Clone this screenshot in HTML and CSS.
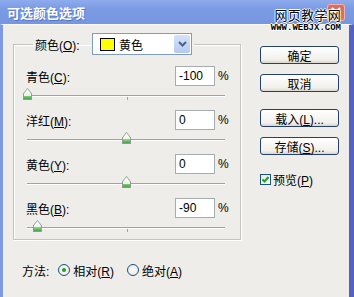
FILE: index.html
```html
<!DOCTYPE html>
<html lang="zh-cn">
<head>
    <meta charset="UTF-8">
    <title>可选颜色选项</title>
    <link rel="stylesheet" href="styles.css">
</head>
<body>
    <div class="window">
        <div class="titlebar">
            <span class="title">可选颜色选项</span>
            <span class="close">
                <svg width="18" height="17" viewBox="0 0 18 17"><path d="M5 4 L13 12 M13 4 L5 12" stroke="#fff" stroke-width="2"/></svg>
            </span>
        </div>

        <div class="watermark">
            <div class="wm-name">网页教学网</div>
            <div class="wm-url">WWW.WEBJX.COM</div>
        </div>

        <div class="client">
            <div class="main">
                <fieldset class="group">
                    <legend class="color-pick">
                        <span class="pick-label">颜色(<u>O</u>):</span>
                        <span class="select">
                            <span class="swatch"></span>
                            <span class="select-text">黄色</span>
                            <span class="select-arrow">
                                <svg width="9" height="6" viewBox="0 0 9 6"><path d="M1 1 L4.5 4.5 L8 1" fill="none" stroke="#4d6185" stroke-width="2"/></svg>
                            </span>
                        </span>
                    </legend>

                    <div class="row">
                        <label>青色(<u>C</u>):</label>
                        <span class="field">-100</span>
                        <span class="pct">%</span>
                    </div>
                    <div class="slider">
                        <span class="track"></span>
                        <span class="tick"></span>
                        <span class="thumb" style="left: 0%"></span>
                    </div>

                    <div class="row">
                        <label>洋红(<u>M</u>):</label>
                        <span class="field">0</span>
                        <span class="pct">%</span>
                    </div>
                    <div class="slider">
                        <span class="track"></span>
                        <span class="tick"></span>
                        <span class="thumb" style="left: 50%"></span>
                    </div>

                    <div class="row">
                        <label>黄色(<u>Y</u>):</label>
                        <span class="field">0</span>
                        <span class="pct">%</span>
                    </div>
                    <div class="slider">
                        <span class="track"></span>
                        <span class="tick"></span>
                        <span class="thumb" style="left: 50%"></span>
                    </div>

                    <div class="row">
                        <label>黑色(<u>B</u>):</label>
                        <span class="field">-90</span>
                        <span class="pct">%</span>
                    </div>
                    <div class="slider">
                        <span class="track"></span>
                        <span class="tick"></span>
                        <span class="thumb" style="left: 5%"></span>
                    </div>
                </fieldset>

                <div class="method">
                    <span class="method-label">方法:</span>
                    <span class="radio checked"></span>
                    <span class="radio-text">相对(<u>R</u>)</span>
                    <span class="radio"></span>
                    <span class="radio-text">绝对(<u>A</u>)</span>
                </div>
            </div>

            <div class="side">
                <button class="btn">确定</button>
                <button class="btn">取消</button>
                <button class="btn btn-gap">载入(<u>L</u>)...</button>
                <button class="btn">存储(<u>S</u>)...</button>
                <div class="preview">
                    <span class="checkbox">
                        <svg width="9" height="9" viewBox="0 0 9 9"><path d="M1.5 4.5 L3.5 6.5 L7.5 2" fill="none" stroke="#21a121" stroke-width="2"/></svg>
                    </span>
                    <span>预览(<u>P</u>)</span>
                </div>
            </div>
        </div>
    </div>
</body>
</html>
```

FILE: styles.css
```css
:root {
    --bg: #eeede9;
    --border-light: #7d99e2;
    --border-dark: #5561c3;
    --xp-dark: #1c5180;
    --group-line: #c4c4bc;
}

body {
    margin: 0;
    font-family: "Liberation Sans", "Noto Sans CJK SC", sans-serif;
    font-size: 12px;
    color: #000;
    background: #fff;
}

.window {
    position: relative;
    width: 354px;
    height: 297px;
    display: flex;
    flex-direction: column;
    overflow: hidden;
    background: var(--bg);
}

.titlebar {
    height: 24px;
    box-sizing: border-box;
    display: flex;
    align-items: center;
    padding: 0 9px 0 7px;
    background: linear-gradient(#8eabec, #7b9be4 35%, #7696e2);
}

.title {
    color: #fff;
    font-family: "Noto Sans CJK SC", sans-serif;
    font-size: 13px;
    font-weight: bold;
    text-shadow: 1px 1px 0 #5574c4;
}

.close {
    margin-left: auto;
    width: 18px;
    height: 17px;
    border-radius: 3px;
    background: #d86e64;
    box-shadow: inset 0 0 0 1px #f0b0a8;
    display: flex;
}

/* watermark lies over the title bar */
.watermark {
    position: absolute;
    top: 8px;
    right: 13px;
    text-align: right;
    color: #000;
    text-shadow: 1px 0 0 #fff, -1px 0 0 #fff, 0 1px 0 #fff, 0 -1px 0 #fff;
}

.wm-name {
    font-family: "Noto Sans CJK SC", sans-serif;
    font-size: 13px;
    line-height: 14px;
    letter-spacing: 0.3px;
}

.wm-url {
    font-family: "Liberation Mono", monospace;
    font-size: 9px;
    font-weight: bold;
    line-height: 8px;
    margin-top: 2px;
}

.client {
    flex: 1;
    display: flex;
    border-left: 3px solid var(--border-light);
    border-right: 5px solid var(--border-dark);
    border-top: 1px solid #fbfbf8;
    padding: 8px 0 0 10px;
}

.group {
    box-sizing: border-box;
    width: 228px;
    height: 207px;
    margin: 0;
    padding: 11px 11px 0 12px;
    border: 1px solid var(--group-line);
    box-shadow: inset 1px 1px 0 #fff, 1px 1px 0 #fff;
}

.color-pick {
    display: flex;
    align-items: center;
    margin-left: 7px;
    padding: 0 2px;
}

.pick-label {
    width: 57px;
}

.select {
    box-sizing: border-box;
    width: 100px;
    height: 22px;
    display: flex;
    align-items: center;
    border: 1px solid #7f9db9;
    background: #fff;
    padding: 0 1px 0 7px;
}

.swatch {
    width: 13px;
    height: 11px;
    background: #ffff00;
    border: 1px solid #000;
}

.select-text {
    margin-left: 4px;
    font-family: "Noto Sans CJK SC", sans-serif;
}

.select-arrow {
    margin-left: auto;
    width: 16px;
    height: 18px;
    border-radius: 2px;
    background: linear-gradient(#d6e2fb, #b5c9f5);
    display: flex;
    align-items: center;
    justify-content: center;
}

.row {
    display: flex;
    align-items: center;
    height: 20px;
}

.row label {
    flex: 1;
}

.field {
    box-sizing: border-box;
    width: 40px;
    height: 20px;
    padding: 2px 3px;
    background: #fff;
    border: 1px solid #a5acb2;
    line-height: 15px;
}

.pct {
    margin-left: 3px;
    width: 11px;
}

.slider {
    position: relative;
    height: 24px;
    width: 198px;
    margin-left: 1px;
}

.track {
    position: absolute;
    left: 0;
    right: 0;
    top: 9px;
    height: 1px;
    background: #a3a39b;
    border-bottom: 1px solid #fff;
}

.tick {
    position: absolute;
    left: 100px;
    top: 11px;
    width: 1px;
    height: 3px;
    background: #a3a39b;
}

.thumb {
    position: absolute;
    top: 2px;
    width: 9px;
    height: 12px;
    margin-left: -4px;
    background: #8d9d8a;
    clip-path: polygon(50% 0, 100% 45%, 100% 100%, 0 100%, 0 45%);
}

.thumb::after {
    content: "";
    position: absolute;
    left: 1px;
    top: 1px;
    right: 1px;
    bottom: 1px;
    background: linear-gradient(#fbfcf8, #eef3e8 65%, #8fd08f 65%, #44a444);
    clip-path: polygon(50% 0, 100% 45%, 100% 100%, 0 100%, 0 45%);
}

.method {
    display: flex;
    align-items: center;
    height: 20px;
    margin-top: 20px;
    padding-left: 9px;
}

.method-label {
    margin-right: 9px;
}

.radio {
    box-sizing: border-box;
    width: 12px;
    height: 12px;
    border-radius: 50%;
    border: 1px solid var(--xp-dark);
    background: radial-gradient(#fff, #e4e2da);
    display: flex;
    align-items: center;
    justify-content: center;
}

.radio.checked::after {
    content: "";
    width: 4px;
    height: 4px;
    border-radius: 50%;
    background: #21a121;
}

.radio-text {
    margin-left: 3px;
    margin-right: 13px;
}

.side {
    display: flex;
    flex-direction: column;
    width: 79px;
    margin-left: 19px;
    padding-top: 13px;
}

.btn {
    box-sizing: border-box;
    height: 18px;
    margin: 0 0 10px;
    padding: 0;
    font-family: "Liberation Sans", "Noto Sans CJK SC", sans-serif;
    font-size: 12px;
    color: #000;
    border: 1px solid #23406f;
    border-radius: 3px;
    background: linear-gradient(#fff, #f1f0ec 80%, #d9d5cb);
}

.btn-gap {
    margin-top: 7px;
}

.preview {
    display: flex;
    align-items: center;
    margin-top: 7px;
    height: 14px;
}

.checkbox {
    box-sizing: border-box;
    width: 11px;
    height: 11px;
    margin-right: 2px;
    border: 1px solid var(--xp-dark);
    background: linear-gradient(135deg, #e6e5dd, #fff);
    display: flex;
    align-items: center;
    justify-content: center;
}
```
